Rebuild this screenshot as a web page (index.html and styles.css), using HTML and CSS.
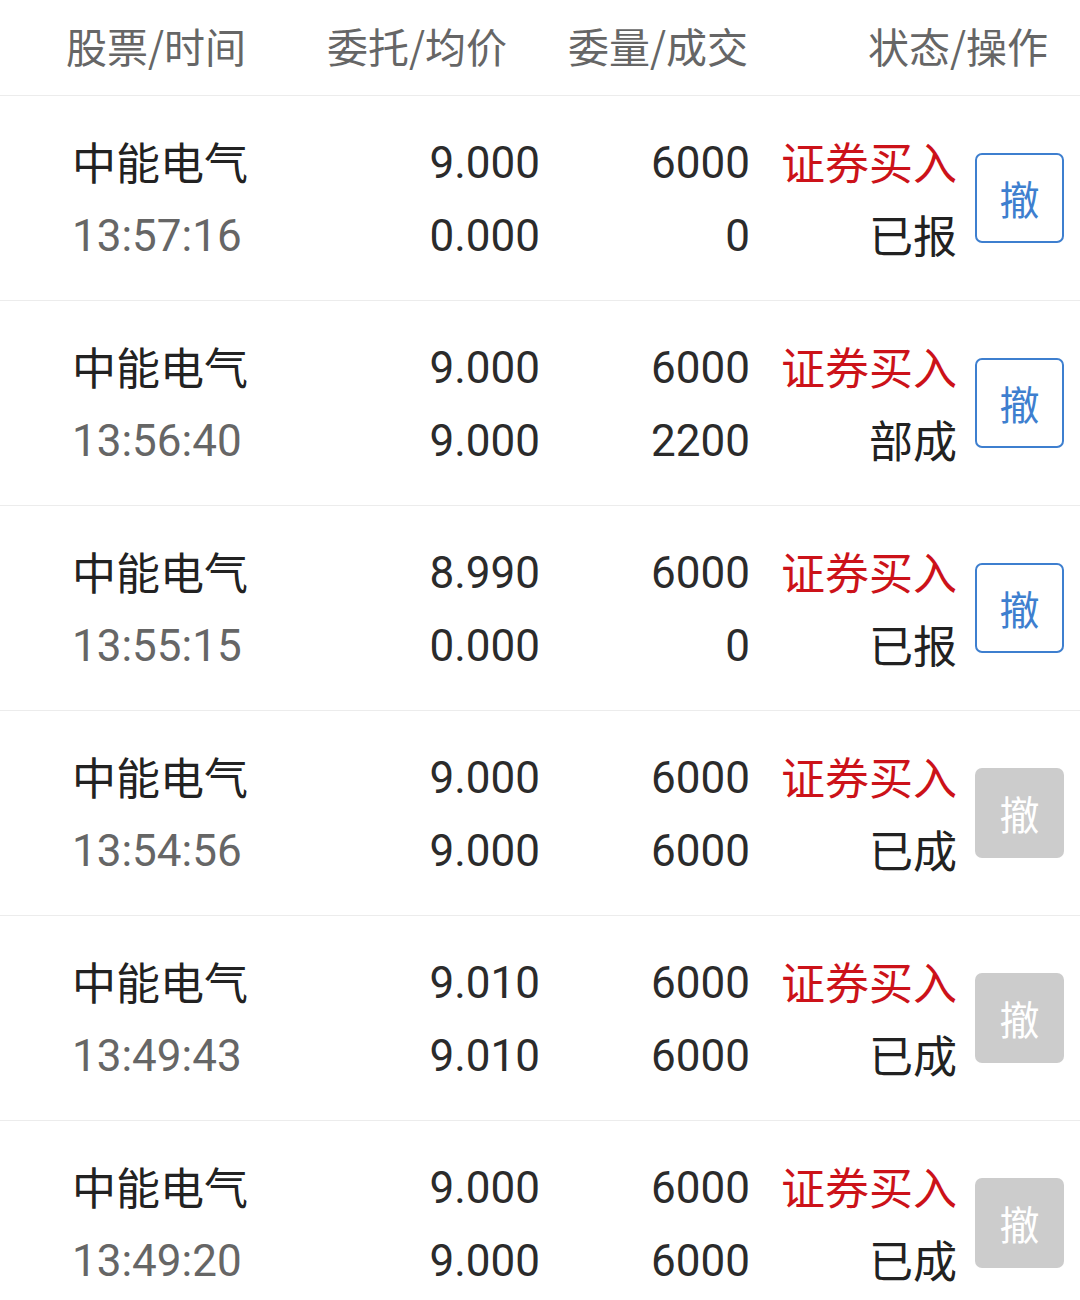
FILE: index.html
```html
<!DOCTYPE html>
<html lang="zh-CN">
<head>
<meta charset="utf-8">
<title>委托列表</title>
<link rel="stylesheet" href="styles.css">
</head>
<body>
<div class="page">
  <div class="head">
    <div class="h h1">股票/时间</div>
    <div class="h h2">委托/均价</div>
    <div class="h h3">委量/成交</div>
    <div class="h h4">状态/操作</div>
  </div>

  <div class="row">
    <div class="cell c1"><div class="l name">中能电气</div><div class="l time">13:57:16</div></div>
    <div class="cell num"><div class="l">9.000</div><div class="l">0.000</div></div>
    <div class="cell num"><div class="l">6000</div><div class="l">0</div></div>
    <div class="cell st"><div class="l buy">证券买入</div><div class="l">已报</div></div>
    <div class="btn">撤</div>
  </div>

  <div class="row">
    <div class="cell c1"><div class="l name">中能电气</div><div class="l time">13:56:40</div></div>
    <div class="cell num"><div class="l">9.000</div><div class="l">9.000</div></div>
    <div class="cell num"><div class="l">6000</div><div class="l">2200</div></div>
    <div class="cell st"><div class="l buy">证券买入</div><div class="l">部成</div></div>
    <div class="btn">撤</div>
  </div>

  <div class="row">
    <div class="cell c1"><div class="l name">中能电气</div><div class="l time">13:55:15</div></div>
    <div class="cell num"><div class="l">8.990</div><div class="l">0.000</div></div>
    <div class="cell num"><div class="l">6000</div><div class="l">0</div></div>
    <div class="cell st"><div class="l buy">证券买入</div><div class="l">已报</div></div>
    <div class="btn">撤</div>
  </div>

  <div class="row">
    <div class="cell c1"><div class="l name">中能电气</div><div class="l time">13:54:56</div></div>
    <div class="cell num"><div class="l">9.000</div><div class="l">9.000</div></div>
    <div class="cell num"><div class="l">6000</div><div class="l">6000</div></div>
    <div class="cell st"><div class="l buy">证券买入</div><div class="l">已成</div></div>
    <div class="btn off">撤</div>
  </div>

  <div class="row">
    <div class="cell c1"><div class="l name">中能电气</div><div class="l time">13:49:43</div></div>
    <div class="cell num"><div class="l">9.010</div><div class="l">9.010</div></div>
    <div class="cell num"><div class="l">6000</div><div class="l">6000</div></div>
    <div class="cell st"><div class="l buy">证券买入</div><div class="l">已成</div></div>
    <div class="btn off">撤</div>
  </div>

  <div class="row">
    <div class="cell c1"><div class="l name">中能电气</div><div class="l time">13:49:20</div></div>
    <div class="cell num"><div class="l">9.000</div><div class="l">9.000</div></div>
    <div class="cell num"><div class="l">6000</div><div class="l">6000</div></div>
    <div class="cell st"><div class="l buy">证券买入</div><div class="l">已成</div></div>
    <div class="btn off">撤</div>
  </div>
</div>
</body>
</html>
```

FILE: styles.css
```css
html, body {
  margin: 0;
  padding: 0;
  background: #ffffff;
}
body {
  width: 1080px;
  height: 1300px;
  overflow: hidden;
  font-family: Roboto, "Noto Sans CJK SC", sans-serif;
}
.page {
  width: 1080px;
}
.head {
  height: 91px;
  padding-bottom: 4px;
  border-bottom: 1px solid #ececec;
  display: grid;
  grid-template-columns: 261px 240px 300px 181px;
  padding-left: 66px;
  align-items: center;
  box-sizing: content-box;
}
.h {
  font-family: "Noto Sans CJK SC", sans-serif;
  font-size: 41px;
  color: #666666;
  line-height: 1;
  white-space: nowrap;
}
.h3 { text-align: right; padding-right: 119px; }
.h4 { text-align: right; }
.row {
  height: 204px;
  border-bottom: 1px solid #ececec;
  display: grid;
  grid-template-columns: 268px 200px 210px 207px 89px;
  padding-left: 72px;
  align-items: center;
}
.cell {
  display: flex;
  flex-direction: column;
  padding-top: 3px;
}
.l {
  height: 73px;
  line-height: 73px;
  font-size: 44px;
  color: #2b2b2b;
  white-space: nowrap;
}
.name {
  font-family: "Noto Sans CJK SC", sans-serif;
  color: #222222;
  line-height: 69px;
}
.time {
  color: #666666;
}
.num .l {
  text-align: right;
}
.st .l {
  text-align: right;
  font-family: "Noto Sans CJK SC", sans-serif;
  color: #222222;
  line-height: 69px;
}
.st .buy {
  color: #cc1219;
}
.btn {
  margin-left: 18px;
  width: 89px;
  height: 90px;
  box-sizing: border-box;
  border: 2.5px solid #3e7fcf;
  border-radius: 7px;
  color: #3e7fcf;
  font-family: "Noto Sans CJK SC", sans-serif;
  font-size: 40px;
  display: flex;
  align-items: center;
  justify-content: center;
  line-height: 1;
}
.btn.off {
  border: none;
  background: #cccccc;
  color: #ffffff;
}
```
